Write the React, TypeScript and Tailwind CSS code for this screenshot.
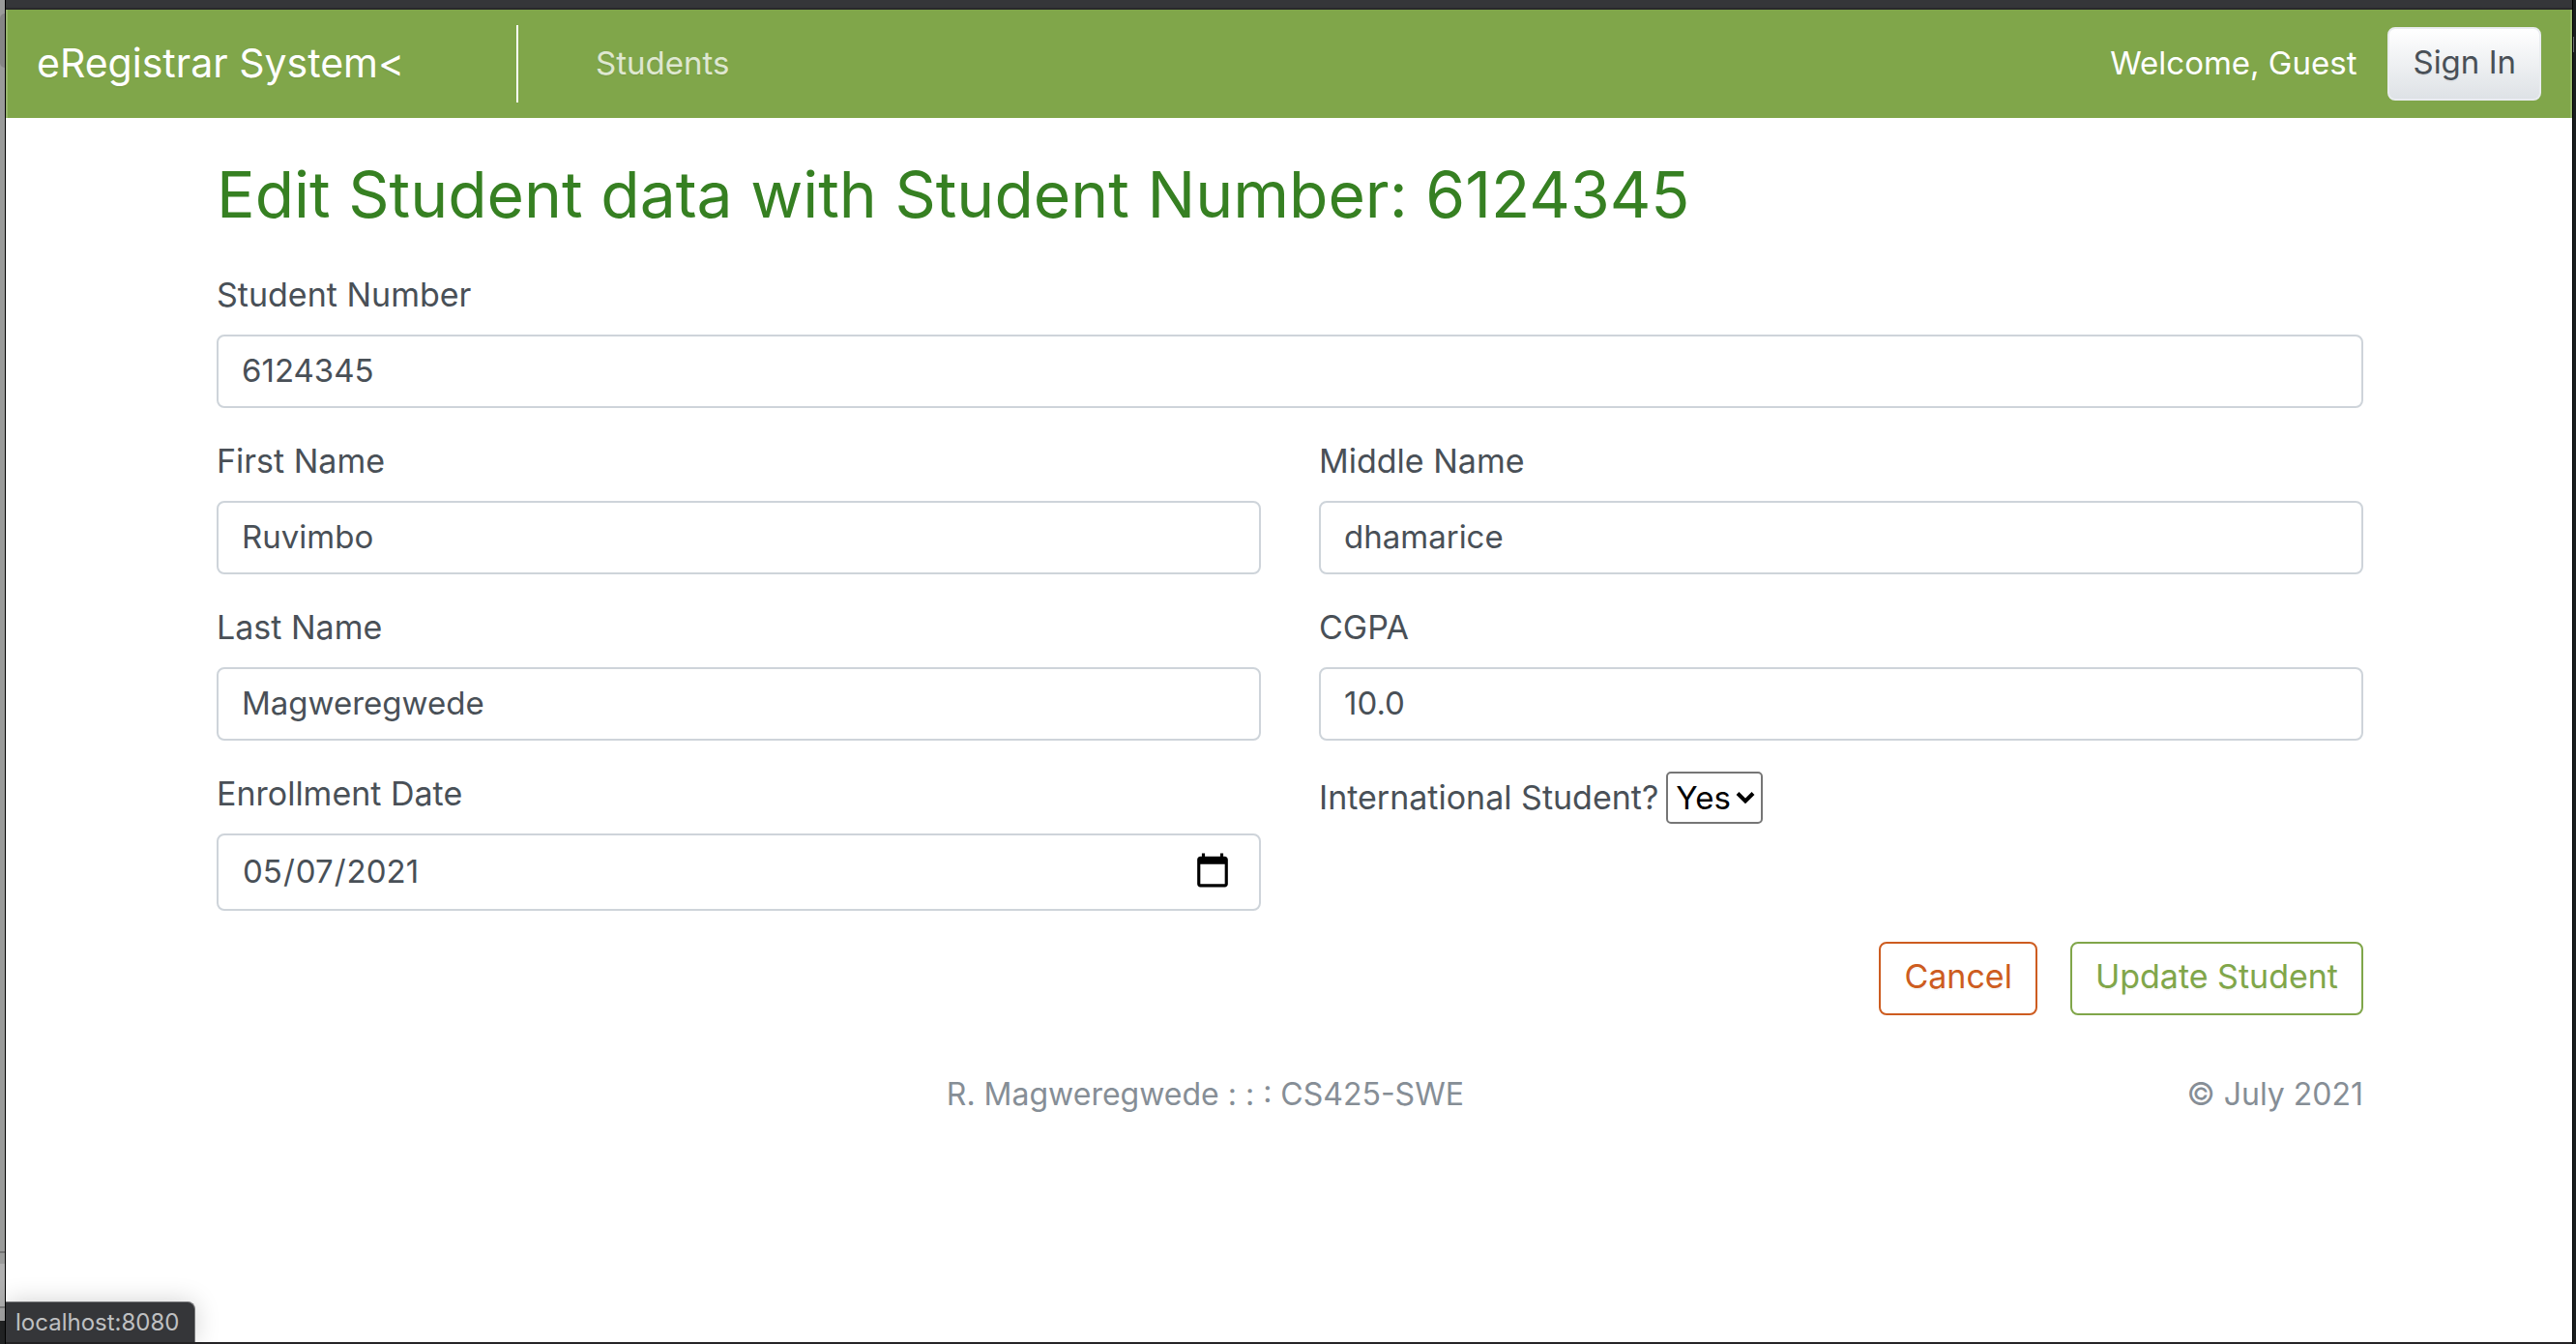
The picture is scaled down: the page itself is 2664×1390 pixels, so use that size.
import { type ReactNode } from "react";

const label = "block text-[34px] leading-[46px]";
const field =
  "block w-full rounded-lg border-2 border-[#ced4da] bg-white px-6 pb-[2px] text-[33px] leading-[48px] text-[#495057]";
const button = "h-[76px] rounded-lg border-2 px-6 pb-1 leading-[48px] [text-shadow:0_2px_0_rgba(0,0,0,0.05)]";

function Field({ id, text, children }: { id: string; text: string; children: ReactNode }) {
  return (
    <div className="flex flex-col gap-[18px]">
      <label htmlFor={id} className={label}>
        {text}
      </label>
      {children}
    </div>
  );
}

export default function App() {
  return (
    <div className="flex min-h-screen bg-white font-[Inter,sans-serif] text-[#495057]">
      <div className="flex w-[6px] shrink-0 flex-col border-r border-black bg-[#9a9b9a]">
        <div className="mt-[14px] h-14 rounded-l-full bg-[#858585]" />
        <div className="grow" />
        <div className="h-[13px] border-t-2 border-[#737373]" />
        <div className="h-[46px] border-b-2 border-[#7d7d7d] bg-[#b0b0b0]" />
        <div className="h-[13px] bg-[#a6a6a6]" />
        <div className="h-6 bg-[#232425]" />
      </div>

      <div className="relative flex min-w-0 grow flex-col border-b-2 border-[#262527]">
        <div className="h-[10px] border-b-2 border-[#29292b] bg-[#353639]" />
        <nav className="flex h-[112px] items-center border-x-2 border-[#97b56b] bg-[#80a64a] px-[30px] text-[33px] leading-[48px] text-white">
          <a
            href="#home"
            className="w-[496px] pb-[2px] text-[41px] leading-[60px] [text-shadow:0_2px_0_rgba(0,0,0,0.05)]"
          >
            eRegistrar System&lt;
          </a>
          <div className="h-20 w-[2px] bg-white" />
          <a href="#students" className="ml-20 pb-[2px] text-white/75 [text-shadow:0_2px_0_rgba(0,0,0,0.05)]">
            Students
          </a>
          <span className="ml-auto mr-8 pb-[2px]">Welcome, Guest</span>
          <button
            type="button"
            className={`${button} border-[#e9ecef] bg-linear-to-b from-white to-[#dee2e6] text-[33px] text-[#495057]`}
          >
            Sign In
          </button>
        </nav>

        <main className="ml-[218px] mr-[216px] pt-10">
          <h1 className="mb-[42px] text-[66px] leading-[78px] text-[#368022]">
            Edit Student data with Student Number: 6124345
          </h1>
          <form className="flex flex-col gap-8">
            <Field id="studentNumber" text="Student Number">
              <input id="studentNumber" defaultValue="6124345" className={`${field} h-[76px]`} />
            </Field>
            <div className="grid grid-cols-2 gap-x-[60px] gap-y-8">
              <Field id="firstName" text="First Name">
                <input id="firstName" defaultValue="Ruvimbo" className={`${field} h-[76px]`} />
              </Field>
              <Field id="middleName" text="Middle Name">
                <input id="middleName" defaultValue="dhamarice" className={`${field} h-[76px]`} />
              </Field>
              <Field id="lastName" text="Last Name">
                <input id="lastName" defaultValue="Magweregwede" className={`${field} h-[76px]`} />
              </Field>
              <Field id="cgpa" text="CGPA">
                <input id="cgpa" defaultValue="10.0" className={`${field} h-[76px]`} />
              </Field>
              <Field id="enrollmentDate" text="Enrollment Date">
                <input
                  id="enrollmentDate"
                  type="date"
                  defaultValue="2021-05-07"
                  className={`${field} h-20 [&::-webkit-calendar-picker-indicator]:mr-1 [&::-webkit-calendar-picker-indicator]:size-10 [&::-webkit-calendar-picker-indicator]:p-0`}
                />
              </Field>
              <div className="flex items-start gap-2">
                <label htmlFor="international" className="text-[34px] leading-[54px]">
                  International Student?
                </label>
                <div className="relative">
                  <select
                    id="international"
                    defaultValue="Yes"
                    className="h-[54px] w-[100px] appearance-none rounded-[5px] border-2 border-[#767676] bg-white pl-2 text-[33px] leading-[48px] text-black"
                  >
                    <option>Yes</option>
                    <option>No</option>
                  </select>
                  <svg
                    viewBox="0 0 20 14"
                    className="pointer-events-none absolute right-2 top-5 h-[14px] w-5 fill-none stroke-black stroke-[4]"
                  >
                    <path d="M2 2.5l8 8 8-8" />
                  </svg>
                </div>
              </div>
            </div>
            <div className="flex justify-end gap-[34px] text-[34px]">
              <button type="button" className={`${button} border-[#cd5c20] text-[#cd5c20]`}>
                Cancel
              </button>
              <button type="submit" className={`${button} border-[#80a64a] text-[#80a64a]`}>
                Update Student
              </button>
            </div>
          </form>
          <footer className="mt-[58px] grid grid-cols-[34%_1fr_auto] text-[32px] leading-[48px] text-[#868e96]">
            <p className="col-start-2 whitespace-nowrap">R. Magweregwede : : : CS425-SWE</p>
            <p className="text-right">© July 2021</p>
          </footer>
        </main>

        <div className="absolute bottom-0 left-0 h-[42px] rounded-tr-lg border-r border-t border-[#77787a] bg-[#353639] pl-[10px] pr-4 text-[24px] leading-[42px] text-[#bfc0c2] shadow-[0_0_26px_rgba(0,0,0,0.18)]">
          localhost:8080
        </div>
      </div>

      <div className="w-1 shrink-0 border-l border-black bg-[#1a1e1f]">
        <div className="mt-[38px] h-4 w-px bg-[#6b6e70]" />
      </div>
    </div>
  );
}
